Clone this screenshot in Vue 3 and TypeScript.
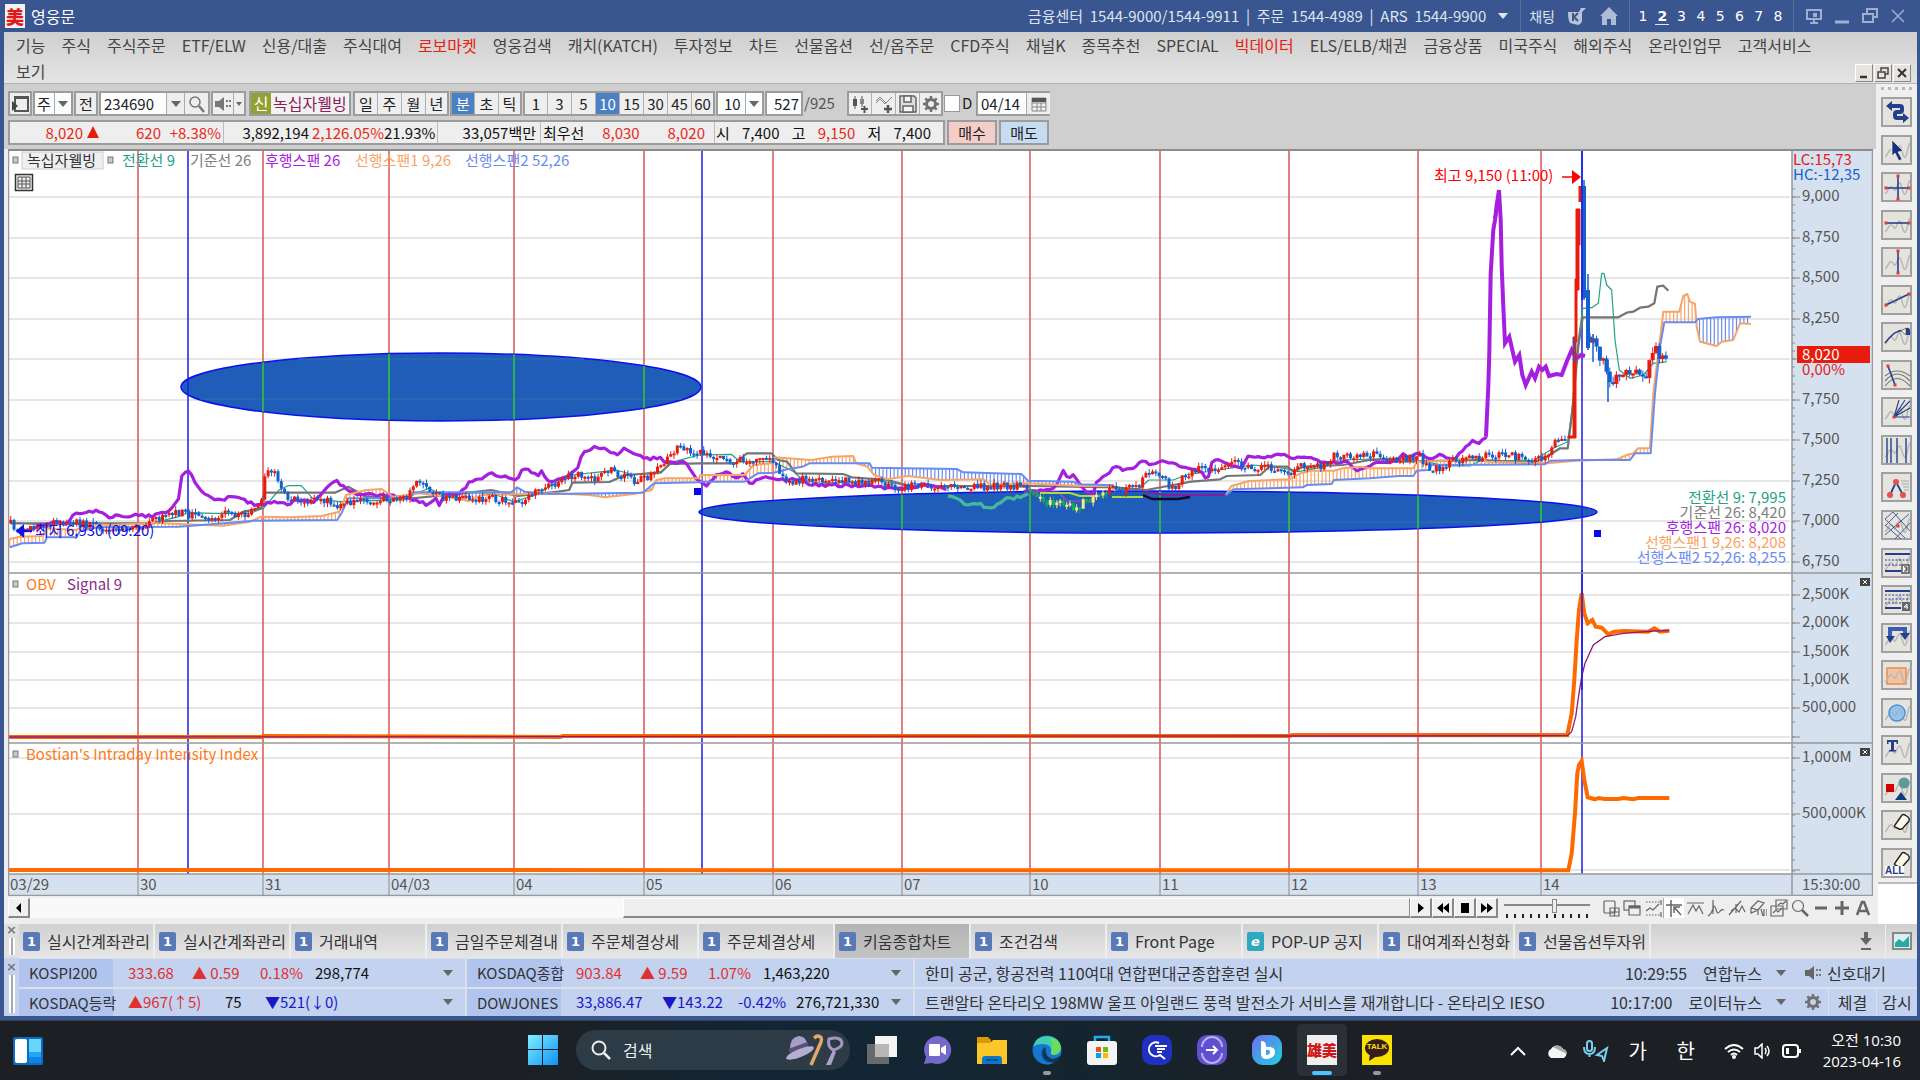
<script setup lang="ts">
import { ref } from 'vue'

type Pt = [number, number]

/* ---------- menus and toolbars ---------- */
const menus = ['기능', '주식', '주식주문', 'ETF/ELW', '신용/대출', '주식대여', '로보마켓', '영웅검색', '캐치(KATCH)', '투자정보', '차트', '선물옵션', '선/옵주문', 'CFD주식', '채널K', '종목추천', 'SPECIAL', '빅데이터', 'ELS/ELB/채권', '금융상품', '미국주식', '해외주식', '온라인업무', '고객서비스', '보기']
const hotMenus = ['로보마켓', '빅데이터']
const screens = [1, 2, 3, 4, 5, 6, 7, 8]
const periods = ['일', '주', '월', '년']
const units = ['분', '초', '틱']
const minutes = ['1', '3', '5', '10', '15', '30', '45', '60']
const unit = ref('분')
const minute = ref('10')
const code = ref('234690')
const count = ref('527')
const date = ref('04/14')
const marker = ref(false)

const tabs = ['실시간계좌관리', '실시간계좌관리', '거래내역', '금일주문체결내', '주문체결상세', '주문체결상세', '키움종합차트', '조건검색', 'Front Page', 'POP-UP 공지', '대여계좌신청화', '선물옵션투자위']
const activeTab = 6

interface Cell { t: string; w: number; c: string }
interface Quote { name: string; cells: Cell[] }
const quotes: Quote[][] = [
  [
    { name: 'KOSPI200', cells: [{ t: '333.68', w: 64, c: 'up' }, { t: '▲ 0.59', w: 68, c: 'up' }, { t: '0.18%', w: 55, c: 'up' }, { t: '298,774', w: 70, c: '' }] },
    { name: 'KOSDAQ등락', cells: [{ t: '▲967(↑5)', w: 97, c: 'up' }, { t: '75', w: 40, c: '' }, { t: '▼521(↓0)', w: 90, c: 'down' }] },
  ],
  [
    { name: 'KOSDAQ종합', cells: [{ t: '903.84', w: 64, c: 'up' }, { t: '▲ 9.59', w: 68, c: 'up' }, { t: '1.07%', w: 55, c: 'up' }, { t: '1,463,220', w: 80, c: '' }] },
    { name: 'DOWJONES', cells: [{ t: '33,886.47', w: 86, c: 'down' }, { t: '▼143.22', w: 76, c: 'down' }, { t: '-0.42%', w: 58, c: 'down' }, { t: '276,721,330', w: 82, c: '' }] },
  ],
]

/* ---------- chart geometry ---------- */
const left = (a: Pt[]): Pt[] => a.map(([x, y]) => [x / 2.24, 340 + y / 3])
const mid = (a: Pt[]): Pt[] => a.map(([x, y]) => [700 + x / 2.24, 400 + y / 3])
const right = (a: Pt[]): Pt[] => a.map(([x, y]) => [1400 + x / 3, 140 + y / 3])
const low = (a: Pt[]): Pt[] => a.map(([x, y]) => [1480 + x / 3, 560 + y / 3])
const line = (a: Pt[]): string => 'M' + a.map(([x, y]) => `${x.toFixed(1)} ${y.toFixed(1)}`).join('L')

function at(a: Pt[], x: number): number {
  for (let i = 1; i < a.length; i++) {
    if (x <= a[i][0]) {
      const [x0, y0] = a[i - 1]
      const [x1, y1] = a[i]
      return x1 === x0 ? y1 : y0 + ((y1 - y0) * (x - x0)) / (x1 - x0)
    }
  }
  return a[a.length - 1][1]
}

let seed = 41
const rnd = (): number => {
  seed = (seed * 1103515245 + 12345) % 2147483648
  return seed / 2147483648
}

const STEP = 3.3
function jitter(a: Pt[], amount: number): Pt[] {
  const out: Pt[] = []
  for (let x = a[0][0]; x < a[a.length - 1][0]; x += STEP) out.push([x, at(a, x) + (rnd() - 0.5) * amount])
  out.push(a[a.length - 1])
  return out
}

const price: Pt[] = [
  ...left([[24, 550], [45, 575], [75, 560], [110, 555], [150, 548], [190, 550], [215, 555], [250, 570], [285, 560], [320, 565], [345, 540], [380, 515], [430, 525], [480, 528], [520, 520], [555, 525], [577, 500], [588, 470], [592, 400], [615, 400], [625, 440], [650, 475], [690, 480], [735, 480], [765, 500], [790, 485], [830, 490], [860, 480], [905, 480], [920, 445], [935, 430], [960, 445], [985, 470], [1030, 475], [1080, 475], [1110, 475], [1160, 490], [1195, 462], [1230, 440], [1260, 415], [1285, 405], [1335, 415], [1365, 385], [1385, 405], [1425, 425], [1460, 410], [1488, 370], [1510, 330], [1540, 325], [1562, 340]]),
  ...mid([[10, 155], [30, 170], [60, 180], [110, 180], [160, 185], [175, 215], [205, 250], [240, 230], [290, 240], [340, 245], [400, 245], [450, 260], [500, 255], [560, 255], [620, 262], [700, 258], [738, 262], [750, 288], [775, 310], [800, 312], [840, 322], [870, 300], [900, 288], [920, 270], [980, 265], [1005, 210], [1035, 235], [1060, 270], [1085, 230], [1115, 205], [1160, 210], [1180, 185], [1220, 195], [1280, 205], [1310, 210], [1322, 240], [1340, 190], [1370, 200], [1405, 200], [1416, 170], [1460, 170], [1510, 165], [1540, 180]]),
  ...right([[0, 962], [55, 945], [90, 985], [130, 988], [150, 965], [250, 950], [300, 945], [380, 952], [410, 965], [440, 940], [470, 905], [503, 900]]),
]
const tail: Pt[] = right([[570, 590], [590, 630], [605, 660], [625, 715], [640, 728], [655, 705], [675, 685], [690, 688], [712, 706], [740, 695], [752, 665], [766, 635], [778, 640], [790, 660], [805, 646]])

interface Candle { x: number; top: number; h: number; hi: number; lo: number; w: number; fill: string }
function candles(a: Pt[], noise: number, wick: number, w: number): Candle[] {
  const out: Candle[] = []
  let prev = a[0][1]
  for (let x = a[0][0]; x < a[a.length - 1][0]; x += STEP) {
    const close = at(a, x) + (rnd() - 0.5) * noise
    const top = Math.min(prev, close)
    const h = Math.max(2, Math.abs(close - prev))
    const inside = x > 1029 && x < 1114 && close > 492
    const rising = close < prev
    const fill = inside ? (rising ? '#f2f08c' : '#10b04a') : rising ? '#e81c0c' : '#1560cc'
    out.push({ x, top, h, hi: top - rnd() * wick, lo: top + h + rnd() * wick, w, fill })
    prev = close
  }
  return out
}
const bars = [...candles(price, 8, 4, 3), ...candles(tail, 13, 6, 4)]

const chikou = jitter([
  ...left([[45, 575], [80, 560], [120, 545], [150, 550], [165, 525], [190, 515], [230, 515], [245, 530], [310, 525], [340, 530], [365, 520], [385, 505], [400, 480], [408, 400], [425, 395], [440, 440], [460, 465], [490, 480], [525, 470], [575, 495], [620, 485], [650, 495], [660, 475], [700, 490], [730, 450], [750, 420], [775, 445], [800, 460], [850, 465], [900, 470], [920, 475], [960, 495], [975, 470], [985, 495], [1000, 460], [1025, 465], [1050, 430], [1075, 415], [1100, 400], [1130, 410], [1155, 425], [1172, 380], [1205, 410], [1215, 385], [1225, 425], [1265, 415], [1295, 385], [1305, 335], [1335, 320], [1370, 335], [1387, 350], [1393, 322], [1425, 345], [1455, 355], [1480, 355], [1500, 370], [1540, 368], [1555, 410], [1566, 420]]),
  ...mid([[0, 240], [15, 262], [35, 225], [60, 215], [80, 235], [98, 222], [108, 255], [135, 232], [185, 240], [230, 240], [245, 255], [300, 255], [400, 260], [450, 268], [500, 255], [552, 268]]),
], 3)
const chikouInside = jitter(mid([[555, 290], [575, 290], [600, 318], [620, 310], [655, 328], [680, 300], [715, 290], [735, 280]]), 3)
const chikouLate = jitter([
  ...mid([[725, 275], [790, 270], [803, 245], [815, 210], [825, 240], [838, 222], [855, 265], [880, 285], [885, 250], [915, 220], [930, 195], [945, 210], [970, 205], [993, 180], [1010, 195], [1030, 182], [1070, 195], [1125, 215], [1137, 245], [1145, 190], [1160, 175], [1175, 190], [1215, 205], [1225, 168], [1260, 172], [1310, 162], [1325, 175], [1370, 172], [1400, 190], [1450, 185], [1470, 212], [1485, 205], [1510, 190], [1560, 185]]),
  ...right([[10, 938], [25, 955], [55, 940], [90, 960], [120, 945], [160, 960], [185, 935], [215, 903], [235, 912], [258, 890]]),
], 2)
const chikouPeak = right([[258, 890], [265, 740], [268, 640], [272, 400], [280, 270], [285, 240], [290, 195], [297, 150], [302, 240], [305, 380], [310, 500], [315, 610], [328, 590], [338, 635], [345, 665], [358, 645], [367, 705], [377, 735], [395, 695], [405, 715], [417, 680], [427, 690], [437, 680], [447, 708], [470, 702], [485, 705], [500, 665], [515, 630], [530, 655], [543, 645], [555, 648]])

const kijun: Pt[] = [
  ...left([[24, 550], [340, 550], [375, 543], [515, 540], [545, 515], [585, 505], [592, 458], [750, 458], [780, 440], [820, 470], [900, 478], [1000, 465], [1100, 450], [1160, 468], [1250, 455], [1275, 450], [1282, 428], [1365, 426], [1400, 405], [1480, 398], [1500, 372], [1568, 370]]),
  ...mid([[0, 190], [80, 190], [105, 160], [160, 160], [175, 180], [195, 185], [215, 220], [320, 222], [340, 232], [420, 240], [470, 258], [740, 258], [930, 262], [1000, 270], [1060, 255], [1100, 245], [1165, 238], [1180, 228], [1255, 225], [1275, 200], [1315, 200], [1330, 215], [1350, 200], [1440, 195], [1500, 180], [1568, 178]]),
  ...right([[0, 965], [150, 962], [250, 960], [400, 968], [440, 950], [480, 925], [503, 925], [515, 830], [535, 620], [548, 532], [655, 532], [680, 518], [700, 515], [720, 503], [745, 500], [763, 490], [772, 440], [790, 437], [805, 452]]),
]
const tenkan: Pt[] = [
  ...left([[24, 548], [110, 555], [345, 548], [400, 530], [420, 518], [480, 520], [560, 520], [590, 505], [625, 450], [645, 437], [675, 437], [700, 475], [760, 485], [830, 482], [900, 480], [960, 445], [985, 460], [1100, 458], [1150, 485], [1200, 465], [1230, 440], [1280, 405], [1350, 395], [1380, 390], [1420, 405], [1480, 395], [1510, 365], [1566, 345]]),
  ...mid([[0, 165], [70, 163], [90, 185], [165, 185], [210, 215], [230, 240], [270, 250], [400, 242], [470, 258], [700, 260], [738, 262]]),
]
const tenkanLate: Pt[] = [
  ...mid([[925, 270], [985, 265], [1005, 240], [1060, 240], [1090, 225], [1160, 210], [1240, 195], [1310, 205], [1340, 215], [1400, 200], [1430, 180], [1560, 175]]),
  ...right([[60, 962], [140, 978], [210, 978], [240, 962], [400, 962], [460, 925], [503, 905], [520, 780], [535, 600], [548, 505], [575, 503], [595, 490], [605, 400], [612, 400], [620, 435], [635, 450], [645, 600], [658, 690], [690, 715], [730, 705], [760, 670], [800, 665]]),
]
const spanA: Pt[][] = [
  [
    ...left([[22, 597], [45, 590], [95, 588], [105, 565], [170, 570], [200, 552], [250, 555], [345, 548], [400, 552], [500, 557], [560, 545], [585, 530], [650, 532], [720, 528], [760, 515], [775, 465], [820, 450], [855, 447], [880, 470], [940, 460], [1000, 470], [1050, 483], [1080, 465], [1240, 460], [1320, 465], [1355, 472], [1420, 462], [1460, 450], [1470, 420], [1490, 415], [1566, 415]]),
    ...mid([[0, 225], [100, 225], [120, 195], [160, 190], [166, 172], [250, 180], [295, 170], [343, 168], [350, 190], [375, 200], [390, 225], [420, 238], [465, 228], [540, 240], [635, 238], [650, 255], [730, 250], [850, 258], [920, 258], [930, 273]]),
  ],
  [
    ...mid([[1178, 285], [1190, 258], [1230, 243], [1320, 238], [1345, 220], [1370, 212], [1420, 212], [1440, 205], [1480, 200], [1500, 205], [1566, 205]]),
    ...right([[0, 985], [40, 985], [50, 965], [140, 962], [200, 955], [240, 950], [260, 965], [440, 970], [530, 962], [650, 958], [680, 945], [700, 940], [715, 925], [750, 925], [760, 760], [775, 640], [790, 515], [838, 515], [850, 468], [862, 462], [870, 485], [885, 492], [890, 560], [900, 605], [950, 618], [965, 605], [1000, 600], [1020, 550], [1053, 552]]),
  ],
]
const spanB: Pt[][] = [
  [
    ...left([[22, 622], [50, 610], [100, 608], [105, 592], [170, 592], [180, 572], [220, 562], [400, 560], [480, 552], [570, 542], [755, 540], [765, 520], [780, 475], [920, 475], [925, 457], [1145, 457], [1158, 442], [1175, 455], [1230, 462], [1440, 458], [1465, 430], [1566, 427]]),
    ...mid([[0, 245], [100, 245], [130, 220], [165, 218], [195, 208], [230, 200], [245, 190], [380, 190], [385, 203], [575, 207], [590, 217], [720, 222], [735, 242], [835, 245], [850, 253], [925, 256], [935, 273]]),
  ],
  [
    ...mid([[1178, 285], [1195, 268], [1350, 262], [1360, 255], [1415, 252], [1420, 240], [1500, 235], [1566, 228]]),
    ...right([[0, 1008], [40, 1008], [50, 992], [85, 990], [95, 975], [435, 973], [450, 962], [540, 960], [690, 960], [705, 940], [752, 940], [765, 760], [780, 620], [793, 547], [885, 547], [893, 537], [950, 532], [1053, 530]]),
  ],
]
let hatchA = ''
let hatchB = ''
spanA.forEach((a, i) => {
  const b = spanB[i]
  for (let x = a[0][0]; x <= a[a.length - 1][0]; x += 3.7) {
    const ya = at(a, x)
    const yb = at(b, x)
    const seg = `M${x.toFixed(1)} ${ya.toFixed(1)}V${yb.toFixed(1)}`
    if (ya < yb) hatchA += seg
    else hatchB += seg
  }
})

const obv: Pt[] = [[8, 737], [262, 737], [263, 736], [560, 737], [563, 736], [644, 736], [1290, 736], [1292, 735], ...low([[262, 525], [275, 460], [283, 360], [290, 240], [297, 150], [305, 100], [313, 160], [323, 190], [337, 180], [347, 200], [365, 203], [385, 223], [400, 216], [430, 213], [505, 215], [523, 205], [540, 215], [568, 212]])]
const signal: Pt[] = [[8, 737], [1290, 736], ...low([[262, 527], [275, 515], [287, 470], [297, 400], [305, 350], [315, 310], [340, 255], [375, 230], [430, 220], [520, 213], [568, 212]])]
const intensity: Pt[] = [[8, 870], ...low([[265, 931], [275, 880], [285, 760], [292, 640], [297, 615], [305, 603], [313, 660], [323, 712], [345, 718], [355, 714], [375, 717], [415, 717], [430, 714], [460, 718], [475, 714], [568, 714]])]

const priceLabels = ['9,000', '8,750', '8,500', '8,250', '', '7,750', '7,500', '7,250', '7,000', '6,750']
const priceTicks = priceLabels.map((t, i) => ({ t, y: Math.round(197 + 40.55 * i) }))
const obvTicks = ['2,500K', '2,000K', '1,500K', '1,000K', '500,000', ''].map((t, i) => ({ t, y: Math.round(595 + 28.3 * i) }))
const intTicks = ['1,000M', '500,000K', ''].map((t, i) => ({ t, y: 758 + 56 * i }))
const grid = [...priceTicks, ...obvTicks, ...intTicks]
let minor = ''
for (let y = 189; y < 570; y += 8.11) minor += `M1792 ${Math.round(y)}h3`
for (let y = 581; y < 740; y += 14.15) minor += `M1792 ${Math.round(y)}h3`
for (let y = 747; y < 872; y += 11.25) minor += `M1792 ${Math.round(y)}h3`

const days = [
  { x: 8, t: '03/29' }, { x: 138, t: '30' }, { x: 263, t: '31' }, { x: 389, t: '04/03' }, { x: 514, t: '04' }, { x: 644, t: '05' }, { x: 773, t: '06' },
  { x: 902, t: '07' }, { x: 1030, t: '10' }, { x: 1160, t: '11' }, { x: 1289, t: '12' }, { x: 1418, t: '13' }, { x: 1541, t: '14' },
]
const marks = [188, 702, 1582]
const inEllipse1 = days.slice(2, 6)
const ellipse2Days = days.slice(7)
const span1 = (x: number) => 34 * Math.sqrt(Math.max(0, 1 - ((x - 441) / 260) ** 2))
const span2 = (x: number) => 21 * Math.sqrt(Math.max(0, 1 - ((x - 1148) / 449) ** 2))

const readout = [
  { t: '전환선 9: 7,995', c: '#1fa287' }, { t: '기준선 26: 8,420', c: '#808080' }, { t: '후행스팬 26: 8,020', c: '#a51fe0' },
  { t: '선행스팬1 9,26: 8,208', c: '#f7a468' }, { t: '선행스팬2 52,26: 8,255', c: '#6a8cf0' },
]
const legend = [
  { x: 122, t: '전환선 9', c: '#1fa287' }, { x: 190, t: '기준선 26', c: '#808080' }, { x: 265, t: '후행스팬 26', c: '#a51fe0' },
  { x: 355, t: '선행스팬1 9,26', c: '#f7a468' }, { x: 465, t: '선행스팬2 52,26', c: '#6a8cf0' },
]

/* ---------- drawing tools, 28 x 28 each ---------- */
const wave = '<path d="M2 21C5 19 6 12 9 14C11 16 11 19 13 16C15 10 17 8 18 12C20 18 21 24 23 20C25 15 25 9 27 7" fill="none" stroke="#b8b8b8" stroke-width="1.5"/>'
const dot = (x: number, y: number, r = 1.5) => `<rect x="${x - r}" y="${y - r}" width="${2 * r}" height="${2 * r}" fill="#e03a3a"/>`
const navy = (d: string, w = 1.6) => `<path d="${d}" fill="none" stroke="#24408c" stroke-width="${w}"/>`
const eraser = '<path d="M12 14L19 4Q20 3 22 4L25 6Q27 8 26 10L20 17Q18 19 16 18L12 16Q11 15 12 14Z" fill="#fdf8e8" stroke="#222" stroke-width="1.4"/>'
const tools: { name: string; svg: string }[] = [
  { name: '새로고침', svg: '<path d="M8 8H17Q19 8 19 10V12Q19 14 17 14H14Q12 14 12 16V18Q12 20 14 20H21" fill="none" stroke="#24408c" stroke-width="4"/><path d="M3 8L9 3V13ZM26 20L20 15V25Z" fill="#24408c"/>' },
  { name: '선택', svg: wave + '<path d="M9 4L20 15L15 16L19 23L16 25L12 17L9 20Z" fill="#1c2f78" stroke="#fff" stroke-width=".6"/>' },
  { name: '십자선', svg: wave + navy('M3 15H26M15 3V26') + dot(3, 15) + dot(26, 15) + dot(15, 3) + dot(15, 26) },
  { name: '수평선', svg: wave + navy('M3 12H26') + dot(3, 12) + dot(26, 12) },
  { name: '수직선', svg: wave + navy('M15 3V25') + dot(15, 3) + dot(15, 25) },
  { name: '추세선', svg: wave + navy('M3 19L26 8') + dot(3, 19) + dot(26, 8) },
  { name: '펜', svg: wave + navy('M2 20Q11 9 14 9Q18 7 20 8') + '<path d="M18 8L23 5V12Z" fill="#fff2c8" stroke="#777"/><path d="M23 5Q28 3 27 12H23Z" fill="#24408c"/>' },
  { name: '부채꼴', svg: '<path d="M2 25Q14 10 27 25M2 20Q14 6 27 20M2 15Q14 5 27 15" fill="none" stroke="#777" stroke-width="1.2"/>' + navy('M5 5L12 24') + dot(5, 5) + dot(12, 24) },
  { name: '팬', svg: wave + navy('M11 19L16 2M11 19L22 2M11 19L27 3M11 19L27 10M11 19H27', 1.1) + dot(11, 19) },
  { name: '시간대', svg: wave + navy('M4 2V27M8 2V27M14 2V27M23 2V27', 1.4) },
  { name: '파동', svg: navy('M7 22L13 9L20 22', 1.8) + '<circle cx="7" cy="22" r="3" fill="#e45050"/><circle cx="13" cy="9" r="3" fill="#e45050"/><circle cx="20" cy="22" r="3" fill="#e45050"/><path d="M18 8H26M19 11H26M20 14H26M21 17H26" stroke="#aaa"/>' },
  { name: '격자', svg: wave + navy('M2 8L10 1L27 20M2 14L18 28M2 24L26 3M12 28L27 12M2 8L22 27M2 15L15 2', 0.8) + dot(15, 15) },
  { name: '3등분', svg: wave + navy('M2 5H27M2 22H18', 2) + '<path d="M2 11H27M2 16H18" stroke="#24408c" stroke-dasharray="2 1.5"/><rect x="19" y="16" width="7" height="8" fill="#fff" stroke="#555" stroke-width="1.5"/><path d="M21 18h3v4h-3m1-2h2" stroke="#333" fill="none"/>' },
  { name: '4등분', svg: wave + navy('M2 5H27M2 22H18', 2) + '<path d="M2 9H27M2 13H27M2 17H18" stroke="#24408c" stroke-dasharray="2 1.5"/><rect x="19" y="16" width="8" height="9" fill="#666"/><path d="M24 23V18L21 21H25" stroke="#fff" fill="none"/>' },
  { name: '되돌림', svg: wave + '<path d="M7 15V5H22V10" fill="none" stroke="#3c5cb0" stroke-width="4"/><path d="M3 12H12L7 19ZM17 9H27L22 16Z" fill="#24408c"/>' },
  { name: '사각형', svg: '<rect x="4" y="7" width="19" height="16" fill="#f3c2a0" stroke="#ee8a4c" stroke-width="1.5"/>' + wave },
  { name: '원', svg: wave + '<circle cx="14" cy="14" r="8" fill="#7fb8ea" fill-opacity=".75" stroke="#4a90d8" stroke-width="1.4"/>' },
  { name: '문자', svg: wave + '<path d="M4 4H15V8H13.500V6H11V14H13V15.500H6V14H8V6H5.500V8H4Z" fill="#24408c"/>' },
  { name: '도형', svg: wave + '<rect x="3" y="10" width="8" height="8" fill="#d00000"/><circle cx="21" cy="9" r="5.500" fill="#5e9a98"/><path d="M18 18L24 26H12Z" fill="#0c3a7c"/>' },
  { name: '지우개', svg: wave + eraser },
  { name: '모두 지우기', svg: eraser },
]
const viewTools = [
  '<rect x="2" y="2" width="11" height="12" rx="1"/><path d="M8 9h9v8H8zM12.500 9v8M8 13h9"/>',
  '<rect x="1" y="2" width="11" height="9"/><path d="M6 7h11v9H6z" fill="#eee"/><path d="M6 8h11" stroke-width="3"/>',
  '<path d="M2 3h14M2 16h14" stroke-dasharray="1.500 1.500"/><path d="M2 12l4-3 3 2 6-6M17 1v5M17 13v5"/>',
  '<path d="M1 6H17M6 1V18M9 8l7 8M9 14V8h6" stroke-width="1.500"/>',
  '<path d="M1 4H18M2 15l5-9 3 6 3-5 4 8"/>',
  '<path d="M6 1V15M1 17c4-2 5-8 6-10 2 0 2 7 4 7s2-5 6-3"/>',
  '<path d="M1 16L13 2M3 12l4-3 4 4 3-6 3 6M8 5v9"/>',
  '<path d="M2 9l7-7 6 2-6 7-7 3zM2 9l7 2v5M12 10l2 7M15 10v7M18 10v7"/>',
  '<path d="M6 1h11v9H6zM1 7h12v10H1z" fill="#eee"/><path d="M3 14l3-3 2 2 4-4M8 6l3-2 2 1 3-3"/>',
  '<circle cx="7" cy="7" r="5.500"/><path d="M11 11l6 6" stroke-width="2.500"/>',
  '<path d="M3 9h12" stroke-width="3"/>',
  '<path d="M2 9h14M9 2v14" stroke-width="3"/>',
  '<path d="M3 16L8 3h2l5 13M5 12h8" stroke-width="2.500"/>',
]
const gear = '<circle cx="9" cy="9" r="4.500" fill="none" stroke="#707070" stroke-width="3"/><path d="M9 1v3M9 14v3M1 9h3M14 9h3M3.300 3.300l2 2M12.700 12.700l2 2M14.700 3.300l-2 2M5.300 12.700l-2 2" stroke="#707070" stroke-width="2.500"/>'
const topTools = [
  { n: '차트유형', s: '<path d="M4 1v13M11 1v11" stroke="#555"/><rect x="2" y="4" width="4" height="7" fill="#555"/><rect x="9" y="4" width="4" height="5" fill="#888"/><path d="M10 14h7M13.500 11v7" stroke="#555" stroke-width="2"/>' },
  { n: '지표추가', s: '<path d="M1 6l4-4 6 6 6-6M1 8l4-4 5 5 6-6" fill="none" stroke="#888"/><path d="M9 14h8M13 10v8" stroke="#555" stroke-width="2.500"/>' },
  { n: '저장', s: '<path d="M1 1h14l2 2v14H1z" fill="#ddd" stroke="#666" stroke-width="1.500"/><path d="M5 1h7v6H5zM4 11h10v6H4z" fill="#f6f6f6" stroke="#666" stroke-width="1.500"/>' },
  { n: '설정', s: gear },
]
</script>

<template>
  <div class="desktop">
    <div class="app">
      <header class="title">
        <span class="logo">美</span>
        <h1>영웅문</h1>
        <span class="phones">금융센터 &nbsp;1544-9000/1544-9911 &nbsp;| &nbsp;주문 &nbsp;1544-4989 &nbsp;| &nbsp;ARS &nbsp;1544-9900</span>
        <button class="caret light" aria-label="전화 목록"></button>
        <div class="tgroup chat">
          <button>채팅</button>
          <button aria-label="키움"><svg width="20" height="20" viewBox="0 0 20 20"><path d="M1 6h11l2-4h5l-4 4v8q0 4-4 5L3 17Q1 14 1 6z" fill="#b9c2d6" /><path d="M6 7v8M11 7l-4 4 4 4" stroke="#3a5690" stroke-width="2" fill="none" /></svg></button>
          <button aria-label="홈"><svg width="20" height="20" viewBox="0 0 20 20"><path d="M1 10L10 1l9 9h-2v9h-5v-6H8v6H3v-9z" fill="#aebbd4" /></svg></button>
        </div>
        <div class="tgroup nums"><button v-for="n in screens" :key="n" :class="{ on: n === 2 }">{{ n }}</button></div>
        <div class="tgroup wins">
          <button aria-label="모니터"><svg width="18" height="18" viewBox="0 0 18 18" fill="none" stroke="#9fafcf" stroke-width="2"><path d="M2 3h14v9H2zM5 16h8M9 12v4" /><path d="M8 6h4v4H8z" fill="#9fafcf" stroke="none" /></svg></button>
          <button aria-label="최소화"><svg width="18" height="18" viewBox="0 0 18 18"><path d="M2 15h14" stroke="#9fafcf" stroke-width="3" /></svg></button>
          <button aria-label="복원"><svg width="18" height="18" viewBox="0 0 18 18" fill="none" stroke="#9fafcf" stroke-width="2"><path d="M6 6V2h10v8h-4M2 7h10v8H2z" /></svg></button>
          <button aria-label="닫기"><svg width="18" height="18" viewBox="0 0 18 18"><path d="M3 3l12 12M15 3L3 15" stroke="#9fafcf" stroke-width="1.5" /></svg></button>
        </div>
      </header>

      <nav class="menu">
        <a v-for="m in menus" :key="m" href="#" :class="{ hot: hotMenus.includes(m) }">{{ m }}</a>
        <div class="mdi">
          <button aria-label="창 최소화"><svg width="14" height="14" viewBox="0 0 14 14"><path d="M3 11h7" stroke="#333" stroke-width="2.5" /></svg></button>
          <button aria-label="창 복원"><svg width="14" height="14" viewBox="0 0 14 14" fill="none" stroke="#444" stroke-width="1.5"><path d="M5 5V2h7v6h-3M2 6h7v6H2z" /></svg></button>
          <button aria-label="창 닫기"><svg width="14" height="14" viewBox="0 0 14 14"><path d="M3 3l8 8M11 3l-8 8" stroke="#333" stroke-width="2" /></svg></button>
        </div>
      </nav>

      <main class="main">
        <section class="work">
          <div class="row tools1">
            <button class="box sq" aria-label="패널"><svg width="18" height="18" viewBox="0 0 18 18"><path d="M4 2h13v14H4zM4 3h13" fill="none" stroke="#555" stroke-width="2" /><path d="M1 6l6 5-6 5z" fill="#444" /></svg></button>
            <label class="box pick"><select aria-label="구분"><option>주</option></select><i class="caret"></i></label>
            <button class="box sq">전</button>
            <div class="box code">
              <input v-model="code" aria-label="종목코드" />
              <button class="arrow" aria-label="종목 목록"><i class="caret"></i></button>
              <button class="sq" aria-label="검색"><svg width="18" height="18" viewBox="0 0 18 18"><circle cx="7" cy="7" r="5" fill="none" stroke="#777" stroke-width="1.5" /><path d="M11 11l5 6" stroke="#777" stroke-width="2.5" /></svg></button>
            </div>
            <div class="box snd">
              <button aria-label="소리"><svg width="18" height="16" viewBox="0 0 18 16"><path d="M1 5h4l5-4v14l-5-4H1z" fill="#777" /><path d="M12 5h2M15 5h2M12 10h2M15 10h2" stroke="#777" stroke-width="2" /></svg></button>
              <button class="thin" aria-label="소리 설정"><i class="caret"></i></button>
            </div>
            <div class="box stock"><b>신</b><span>녹십자웰빙</span></div>
            <div class="box seg"><button v-for="p in periods" :key="p">{{ p }}</button></div>
            <div class="box seg"><button v-for="u in units" :key="u" :class="{ on: u === unit }" @click="unit = u">{{ u }}</button></div>
            <div class="box seg"><button v-for="m in minutes" :key="m" :class="{ on: m === minute }" @click="minute = m">{{ m }}</button></div>
            <label class="box pick wide"><select aria-label="분 간격"><option>10</option></select><i class="caret"></i></label>
            <input v-model="count" class="box cnt" aria-label="표시 개수" />
            <span class="total">/925</span>
            <div class="box seg"><button v-for="t in topTools" :key="t.n" :aria-label="t.n"><svg width="18" height="18" viewBox="0 0 18 18" v-html="t.s"></svg></button></div>
            <label class="chk"><input v-model="marker" type="checkbox" />D</label>
            <div class="box date"><input v-model="date" aria-label="날짜" /><button class="sq" aria-label="달력"><svg width="16" height="16" viewBox="0 0 16 16"><path d="M1 2h14v13H1zM1 7h14M1 11h14M6 7v8M10 7v8" fill="none" stroke="#888" /><path d="M1 2h14v4H1z" fill="#555" /></svg></button></div>
          </div>

          <div class="row tools2">
            <div class="strip">
              <div class="s1"><span class="r w73">8,020</span><i class="tri"></i><span class="r w62">620</span><span class="r w60">+8.38%</span></div>
              <div class="s2"><span class="b r w86">3,892,194</span><span class="r w74">2,126.05%</span><span class="b r w50">21.93%</span></div>
              <div class="s3"><span class="b r w98">33,057백만</span></div>
              <div class="s4"><span class="b">최우선</span><span class="r w53">8,030</span><span class="r w63">8,020</span></div>
              <div class="s5"><span class="b">시</span><span class="b">7,400</span><span class="b">고</span><span>9,150</span><span class="b">저</span><span class="b">7,400</span></div>
            </div>
            <button class="buy">매수</button>
            <button class="sell">매도</button>
          </div>

          <svg class="chart" viewBox="8 149 1865 747" role="img" aria-label="녹십자웰빙 10분 차트">
            <rect x="8" y="149" width="1784" height="725" fill="#fff" />
            <rect x="1792" y="149" width="81" height="747" fill="#d6e1ef" />
            <rect x="8" y="874" width="1865" height="22" fill="#d6e1ef" />
            <path v-for="g in grid" :key="'g' + g.y" :d="`M8 ${g.y}H1790`" stroke="#dedede" stroke-width="1.5" />
            <path v-for="d in days.slice(1)" :key="'d' + d.x" :d="`M${d.x} 150V874`" stroke="#d94848" stroke-width="1.4" />

            <ellipse cx="441" cy="387" rx="260" ry="34" fill="#1f5db8" stroke="#0a10f0" stroke-width="1.5" />
            <ellipse cx="1148" cy="512" rx="449" ry="21" fill="#1f5db8" stroke="#0a10f0" stroke-width="1.5" />
            <path d="M298 359H584M200 399H682M800 522H1500" stroke="#376fae" />
            <path v-for="d in inEllipse1" :key="'e' + d.x" :d="`M${d.x} ${387 - span1(d.x)}V${387 + span1(d.x)}`" stroke="#2ccc28" stroke-width="1.5" />
            <path v-for="d in ellipse2Days" :key="'f' + d.x" :d="`M${d.x} ${512 - span2(d.x)}V${512 + span2(d.x)}`" stroke="#2ccc28" stroke-width="1.5" />
            <path v-for="m in marks" :key="'m' + m" :d="`M${m} 150V874`" stroke="#1c1ce8" stroke-width="1.5" />

            <g fill="none" stroke-linejoin="round">
              <path :d="hatchA" stroke="#f7a468" stroke-width="1.2" />
              <path :d="hatchB" stroke="#6a8cf0" stroke-width="1.2" />
              <path :d="line(tenkan)" stroke="#1fa287" stroke-width="1.2" />
              <path :d="line(tenkanLate)" stroke="#1fa287" stroke-width="1.2" />
              <path :d="line(kijun)" stroke="#747474" stroke-width="2.2" />
              <path :d="line(chikou)" stroke="#a51fe0" stroke-width="3.2" />
              <path :d="line(chikouLate)" stroke="#a51fe0" stroke-width="3.2" />
              <path :d="line(chikouInside)" stroke="#46ba96" stroke-width="3.2" />
              <path d="M1036 492H1058L1067 501H1088L1108 492" stroke="#c040b8" stroke-width="1.2" />
              <path d="M1040 493H1070L1080 496H1100M1112 497H1143" stroke="#a8dc40" stroke-width="2.2" />
              <path d="M1145 492L1165 495H1225" stroke="#8020a0" stroke-width="2" />
              <path d="M1143 495L1152 499H1178L1190 497" stroke="#150828" stroke-width="2.4" />
              <path v-for="(a, i) in spanA" :key="'a' + i" :d="line(a)" stroke="#f7a468" stroke-width="2" />
              <path v-for="(a, i) in spanB" :key="'b' + i" :d="line(a)" stroke="#6a8cf0" stroke-width="2" />
            </g>
            <g v-for="(c, i) in bars" :key="i">
              <path :d="`M${c.x} ${c.hi}V${c.lo}`" :stroke="c.fill" />
              <rect :x="c.x - c.w / 2" :y="c.top" :width="c.w" :height="c.h" :fill="c.fill" />
            </g>
            <path :d="line(chikouPeak)" fill="none" stroke="#a51fe0" stroke-width="4" />
            <path d="M1500 195L1497 218L1493 218Z" fill="#a51fe0" />
            <path d="M1568 436H1573V337H1575V279H1576V209H1580V245H1579V290H1577V342H1576V438H1568Z" fill="#e81c0c" stroke="#e81c0c" />
            <path d="M1580 186V202" stroke="#e81c0c" stroke-width="3" />
            <path d="M1582 186H1586V290H1590V348H1586V298H1582Z" fill="#1560cc" />
            <path d="M1584 180V300M1588 274V350M1593 334V362M1608 360V402M1574 338V362" stroke="#1560cc" stroke-width="1.5" />
            <path d="M1582 150V300" stroke="#1c1ce8" stroke-width="1.5" />

            <path :d="line(obv)" fill="none" stroke="#ff6a00" stroke-width="4" />
            <path :d="line(signal)" fill="none" stroke="#8c1c78" stroke-width="1.3" />
            <path :d="line(intensity)" fill="none" stroke="#ff6a00" stroke-width="4" />
            <path d="M1582 570V690" stroke="#1c1ce8" stroke-width="1.5" />

            <path d="M8 573H1873M8 743H1873M8 874H1873M8 895.500H1873M1792 149V896M1872.500 149V896M8.500 149V896" stroke="#999" stroke-width="1.5" />
            <path d="M8 150H1873" stroke="#8c8c8c" stroke-width="2" />
            <path v-for="d in days.slice(1)" :key="'t' + d.x" :d="`M${d.x} 874V896`" stroke="#8a8a8a" />
            <path :d="minor" stroke="#8a8a8a" />

            <g class="axis">
              <template v-for="g in grid" :key="'l' + g.y">
                <path :d="`M1792 ${g.y}h8`" stroke="#8a8a8a" />
                <text v-if="g.t" x="1802" :y="g.y + 4">{{ g.t }}</text>
              </template>
              <text v-for="d in days" :key="'x' + d.x" :x="d.x + 2" y="890">{{ d.t }}</text>
              <text x="1802" y="890">15:30:00</text>
            </g>
            <rect x="1797" y="346" width="73" height="17" fill="#e81c0c" />
            <g>
              <text x="1802" y="360" fill="#fff">8,020</text>
              <text x="1802" y="375" fill="#e0201c">0,00%</text>
              <text x="1793" y="165" fill="#e0201c">LC:15,73</text>
              <text x="1793" y="180" fill="#1c60d0">HC:-12,35</text>
              <text x="1434" y="181" fill="#f00">최고 9,150 (11:00)</text>
              <text x="35" y="536" fill="#1010e8">최저 6,930 (09:20)</text>
              <text v-for="l in legend" :key="l.t" :x="l.x" y="166" :fill="l.c">{{ l.t }}</text>
              <text v-for="(r, i) in readout" :key="r.t" x="1786" :y="503 + 15 * i" :fill="r.c" text-anchor="end">{{ r.t }}</text>
              <text x="26" y="590" fill="#ff7a1c">OBV</text>
              <text x="67" y="590" fill="#8c2a8c">Signal 9</text>
              <text x="26" y="760" fill="#ff7a1c">Bostian's Intraday Intensity Index</text>
              <rect x="22" y="152" width="81" height="17" fill="#efefef" stroke="#ccc" />
              <text x="27" y="166" fill="#333">녹십자웰빙</text>
            </g>
            <path d="M1562 177H1574" stroke="#f00" stroke-width="1.5" /><path d="M1572 170L1581 177L1572 184Z" fill="#f00" />
            <path d="M22 531H32" stroke="#1010e8" stroke-width="2" /><path d="M24 524L16 531L24 538Z" fill="#1010e8" />
            <g fill="#c8c8c8" stroke="#777"><rect x="13" y="157" width="5" height="6" /><rect x="108" y="157" width="5" height="6" /><rect x="13" y="581" width="5" height="6" /><rect x="13" y="751" width="5" height="6" /></g>
            <rect x="15.500" y="174.500" width="17" height="16" fill="#eee" stroke="#333" stroke-width="1.5" />
            <path d="M18 177H30V188H18ZM18 181H30M18 184H30M22 177V188M26 177V188" fill="none" stroke="#555" />
            <rect x="694" y="488" width="7" height="7" fill="#0808f0" /><rect x="1594" y="530" width="7" height="7" fill="#0808f0" />
            <g v-for="y in [578, 748]" :key="y"><rect x="1860" :y="y" width="10" height="8" fill="#444" /><path :d="`M1863 ${y + 2}l4 4m0-4l-4 4`" stroke="#fff" /></g>
          </svg>

          <div class="scroll">
            <button class="sb" aria-label="왼쪽으로"><svg width="14" height="12"><path d="M9 1L4 6l5 5z" /></svg></button>
            <div class="track"><div class="thumb"></div></div>
            <button class="sb" aria-label="재생"><svg width="14" height="12"><path d="M4 1l6 5-6 5z" /></svg></button>
            <button class="sb" aria-label="뒤로"><svg width="14" height="12"><path d="M7 1L1 6l6 5zM13 1L7 6l6 5z" /></svg></button>
            <button class="sb" aria-label="정지"><svg width="14" height="12"><path d="M3 1h8v10H3z" /></svg></button>
            <button class="sb" aria-label="앞으로"><svg width="14" height="12"><path d="M1 1l6 5-6 5zM7 1l6 5-6 5z" /></svg></button>
            <div class="slide"><input type="range" min="0" max="100" value="59" aria-label="확대 비율" /></div>
            <button v-for="(v, i) in viewTools" :key="i" class="vt" :class="{ on: i === 3 }" :aria-label="'보기 도구 ' + (i + 1)"><svg width="18" height="18" viewBox="0 0 18 18" fill="none" stroke="#666" stroke-width="1.2" v-html="v"></svg></button>
          </div>
        </section>

        <aside class="side">
          <div class="grip"></div>
          <div class="stack">
            <button v-for="t in tools" :key="t.name" :aria-label="t.name"><svg width="28" height="28" viewBox="0 0 28 28" v-html="t.svg"></svg><span v-if="t.name === '모두 지우기'">ALL</span></button>
          </div>
          <div class="blank"></div>
        </aside>
      </main>

      <div class="dock">
        <div class="hold"><i>×</i><u></u></div>
        <div class="tabs">
          <button v-for="(t, i) in tabs" :key="i" :class="{ on: i === activeTab }"><b :class="{ web: i === 9 }">{{ i === 9 ? 'e' : 1 }}</b><span>{{ t }}</span></button>
        </div>
        <button class="ico" aria-label="내리기"><svg width="14" height="20" viewBox="0 0 14 20"><path d="M5 1h4v6h4l-6 7-6-7h4zM2 17h10v2H2z" fill="#666" /></svg></button>
        <button class="ico pic" aria-label="화면"><svg width="20" height="18" viewBox="0 0 20 18"><rect x="1" y="1" width="18" height="16" fill="#d8f0f0" stroke="#888" stroke-width="2" /><path d="M3 15V11l4-4 4 3 6-6v11z" fill="#2aa8a4" /></svg></button>
      </div>

      <div class="ticker">
        <div class="hold tall"><i>×</i><u></u></div>
        <div v-for="(g, gi) in quotes" :key="gi" class="group">
          <div v-for="q in g" :key="q.name" class="quote">
            <span class="name">{{ q.name }}</span>
            <span v-for="c in q.cells" :key="c.t" class="cell" :class="c.c" :style="{ width: c.w + 'px' }">{{ c.t }}</span>
            <button class="drop" :aria-label="q.name + ' 선택'"><i class="caret"></i></button>
          </div>
        </div>
        <div class="news">
          <div class="item"><p>한미 공군, 항공전력 110여대 연합편대군종합훈련 실시</p><time>10:29:55</time><span class="src">연합뉴스</span><button class="drop" aria-label="뉴스 선택"><i class="caret"></i></button>
            <button class="sig"><svg width="18" height="16" viewBox="0 0 18 16"><path d="M1 5h4l5-4v14l-5-4H1z" fill="#666" /><path d="M12 5h2M15 5h2M12 10h2M15 10h2" stroke="#777" stroke-width="2" /></svg>신호대기</button></div>
          <div class="item"><p>트랜알타 온타리오 198MW 울프 아일랜드 풍력 발전소가 서비스를 재개합니다 - 온타리오 IESO</p><time>10:17:00</time><span class="src">로이터뉴스</span><button class="drop" aria-label="통신사 선택"><i class="caret"></i></button>
            <div class="end"><button aria-label="설정"><svg width="18" height="18" viewBox="0 0 18 18" v-html="gear"></svg></button><button>체결</button><button>감시</button></div></div>
        </div>
      </div>
    </div>

    <footer class="taskbar">
      <div class="widget"><button aria-label="위젯"><svg width="30" height="28" viewBox="0 0 30 28"><rect width="30" height="28" rx="2" fill="#0c6cc4" /><rect x="2" y="2" width="12" height="24" rx="2" fill="#fff" /><rect x="16" y="2" width="12" height="13" fill="#68d6fc" /><rect x="16" y="15" width="12" height="5" fill="#22a6f6" /><rect x="16" y="20" width="12" height="6" fill="#0c84ea" /></svg></button></div>
      <div class="pins">
        <button aria-label="시작"><svg width="30" height="30" viewBox="0 0 30 30"><defs><linearGradient id="w" x2="1" y2="1"><stop stop-color="#80f0ff" /><stop offset="1" stop-color="#1090f8" /></linearGradient></defs><path d="M0 0h14v14H0zM15 0h15v14H15zM0 15h14v15H0zM15 15h15v15H15z" fill="url(#w)" /></svg></button>
        <label class="search">
          <svg width="20" height="20" viewBox="0 0 20 20"><circle cx="8" cy="8" r="6.500" fill="none" stroke="#eee" stroke-width="2" /><path d="M13 13l6 6" stroke="#eee" stroke-width="2.500" /></svg>
          <input placeholder="검색" aria-label="검색" />
          <svg width="58" height="32" viewBox="0 0 58 32"><path d="M4 15Q4 3 13 2Q20 2 22 12L24 16Z" fill="#a8a0c4" /><path d="M3 17L22 10" stroke="#5a5080" stroke-width="4" /><ellipse cx="14" cy="19" rx="15" ry="4" transform="rotate(-22 14 19)" fill="#b4aed0" /><path d="M25 31L35 8Q37 2 31 2L28 4" fill="none" stroke="#e0a868" stroke-width="3.500" /><path d="M43 5Q55 2 56 9Q56 14 47 16Q41 12 43 5Z" fill="none" stroke="#a098c0" stroke-width="3" /><path d="M47 16L50 18L45 31L40 31Z" fill="#a8a2c8" /></svg>
        </label>
        <button aria-label="작업 보기"><svg width="30" height="30" viewBox="0 0 30 30"><rect x="8" y="1" width="22" height="21" fill="#f4f4f4" /><rect x="0" y="9" width="22" height="20" fill="#777" fill-opacity=".85" /><rect x="8" y="9" width="14" height="13" fill="#b8b8b8" /></svg></button>
        <button aria-label="채팅"><svg width="30" height="30" viewBox="0 0 30 30"><path d="M15 1a14 14 0 1 1-5 27L2 29l2-7A14 14 0 0 1 15 1z" fill="#7468c8" /><rect x="7" y="9" width="11" height="12" rx="1" fill="#fff" /><path d="M19 13l5-3v10l-5-3z" fill="#fff" /></svg></button>
        <button aria-label="탐색기"><svg width="30" height="30" viewBox="0 0 30 30"><path d="M0 2h11l3 3v4H0z" fill="#dc9800" /><path d="M0 8h13l3-3h14v24H0z" fill="#fcc828" /><path d="M5 29v-5q0-3 3-3h14q3 0 3 3v5z" fill="#0c78c8" /><path d="M9 25h12" stroke="#0a4c90" stroke-width="2" /></svg></button>
        <button class="run" aria-label="Edge"><svg width="30" height="30" viewBox="0 0 30 30"><circle cx="15" cy="15" r="14.500" fill="#1478d0" /><path d="M1 12Q4 1 15 1Q28 2 29 13Q29 19 22 20Q18 20 19 17Q20 9 11 9Q4 9 1 12Z" fill="#40cdb0" /><path d="M18 3Q28 4 29 13Q28 19 22 20Q18 19 19 17Q22 10 18 3Z" fill="#6cdc60" /><path d="M12 12Q7 18 11 24Q16 30 25 25Q14 26 12 12Z" fill="#0c4c94" /><path d="M14 12Q12 21 20 24Q24 24 28 21Q27 26 22 28Q12 27 11 19Q11 14 14 12Z" fill="#12344e" /></svg></button>
        <button aria-label="스토어"><svg width="30" height="30" viewBox="0 0 30 30"><path d="M8 7V2h14v5" fill="none" stroke="#1cb0f0" stroke-width="2.500" /><rect x="0" y="6" width="30" height="24" rx="3" fill="#f4f4f4" /><path d="M9 12h5v5H9z" fill="#f05022" /><path d="M16 12h5v5h-5z" fill="#7cba00" /><path d="M9 18h5v5H9z" fill="#00a2ee" /><path d="M16 18h5v5h-5z" fill="#ffb900" /></svg></button>
        <button aria-label="빠른 검색"><svg width="30" height="30" viewBox="0 0 30 30"><rect width="30" height="30" rx="10" fill="#2030c0" /><path d="M17 8a7 7 0 1 0 1 12l5 4M13 11h12M15 14h8M15 17h5" fill="none" stroke="#fff" stroke-width="2" /></svg></button>
        <button aria-label="전송"><svg width="30" height="30" viewBox="0 0 30 30"><rect width="30" height="30" rx="10" fill="#6050d0" /><path d="M5 12a10 10 0 0 1 20 0M5 18a10 10 0 0 0 20 0" fill="none" stroke="#b8b0f0" stroke-width="2" /><path d="M9 15h10M16 11l4 4-4 4" fill="none" stroke="#fff" stroke-width="2" /></svg></button>
        <button aria-label="브라우저"><svg width="30" height="30" viewBox="0 0 30 30"><defs><linearGradient id="b" x2="1" y2="1"><stop stop-color="#6c70f0" /><stop offset="1" stop-color="#20d0e0" /></linearGradient></defs><rect width="30" height="30" rx="11" fill="url(#b)" /><path d="M9 6q5 0 5 5v1q9-1 9 5t-8 7q-6 0-6-5z" fill="#fff" /><path d="M14 15q4-1 4 2t-4 3z" fill="#48a0e8" /></svg></button>
        <button class="cur" aria-label="영웅문"><span class="hero">雄美</span></button>
        <button class="run" aria-label="카카오톡"><svg width="30" height="30" viewBox="0 0 30 30"><rect width="30" height="30" fill="#fae100" /><ellipse cx="15" cy="13" rx="12" ry="9" fill="#371d1e" /><path d="M8 18L7 26L15 21Z" fill="#371d1e" /></svg><em>TALK</em></button>
      </div>
      <div class="tray">
        <svg class="chev" width="16" height="10" viewBox="0 0 16 10"><path d="M1 9l7-7 7 7" fill="none" stroke="#fff" stroke-width="2" /></svg>
        <svg width="22" height="14" viewBox="0 0 22 14"><path d="M5 14a5 5 0 0 1 0-9a7 7 0 0 1 12 0a5 5 0 0 1 1 9z" fill="#f4f4f4" /><path d="M7 3a7 7 0 0 1 10 2a5 5 0 0 1 4 5L7 3z" fill="#a8a8a8" /></svg>
        <svg class="mic" width="26" height="22" viewBox="0 0 26 22" fill="none" stroke="#78d0ec" stroke-width="2"><rect x="4" y="1" width="5" height="10" rx="2.500" /><path d="M1 7q0 7 5.500 7T12 7M6.500 14v3M24 8L14 15l5 1 2 5z" /></svg>
        <span class="ime">가</span><span class="ime">한</span>
        <svg class="wifi" width="20" height="16" viewBox="0 0 20 16" fill="none" stroke="#fff" stroke-width="2"><path d="M1 6q9-8 18 0M4 9q6-5 12 0M7 12q3-3 6 0" /><circle cx="10" cy="14" r="1" fill="#fff" /></svg>
        <svg width="18" height="16" viewBox="0 0 18 16" fill="none" stroke="#fff" stroke-width="1.500"><path d="M1 5h3l4-4v14l-4-4H1zM11 5q2 3 0 6M13 3q4 5 0 10" /></svg>
        <svg width="20" height="14" viewBox="0 0 20 14"><rect x="1" y="1" width="15" height="12" rx="3" fill="none" stroke="#fff" stroke-width="2" /><path d="M4 4h3v6H4zM17 5h2v4h-2z" fill="#fff" /></svg>
        <p class="clock">오전 10:30<br />2023-04-16</p>
      </div>
    </footer>
  </div>
</template>

<style>
body { margin: 0; background: #1c2024; }
</style>

<style scoped>
.desktop {
  --ui: "Noto Sans CJK KR", sans-serif;
  min-height: 100vh;
  display: flex;
  flex-direction: column;
  font: 16px/20px var(--ui);
  color: #333;
}
.desktop * { box-sizing: border-box; }
button, input, select { font: inherit; color: inherit; margin: 0; padding: 0; border: 0; background: none; border-radius: 0; white-space: nowrap; }
button { display: flex; align-items: center; justify-content: center; flex: none; }
svg { display: block; flex: none; }
p, h1 { margin: 0; font-size: inherit; font-weight: 400; }
.app { background: #3a5690; padding: 0 3px 4px 4px; flex: 1; display: flex; flex-direction: column; }
.caret { width: 0; height: 0; border: 5px solid transparent; border-top: 6px solid #666; border-bottom: 0; flex: none; display: block; }
.caret.light { border-top-color: #dfe6f2; }

.title { height: 32px; display: flex; align-items: center; color: #dde4f0; padding: 0 10px 0 1px; }
.logo { width: 20px; height: 24px; background: #f2f2f2; color: #e01818; font: 900 18px/24px var(--ui); text-align: center; overflow: hidden; }
.title h1 { margin-left: 6px; color: #fff; }
.phones { margin-left: auto; white-space: nowrap; margin-right: 12px; font-size: 15px; }
.tgroup { display: flex; align-items: center; height: 32px; border-left: 1px solid #54709f; }
.chat { margin-left: 12px; padding: 0 10px 0 8px; gap: 12px; font-size: 14px; }
.nums { width: 164px; padding: 0 8px 0 6px; justify-content: space-between; font: 14px/16px "DejaVu Sans", sans-serif; color: #fff; }
.nums button { width: 14px; }
.nums .on { font-weight: 700; border-bottom: 1px solid #dde4f0; }
.wins { padding-left: 11px; gap: 10px; }

.menu { position: relative; height: 52px; display: flex; flex-wrap: wrap; align-content: flex-start; column-gap: 16px; padding: 0 80px 0 12px; background: linear-gradient(#cfcfcf, #e4e4e4); border-bottom: 1px solid #b4b4b4; }
.menu a { color: #444; text-decoration: none; line-height: 26px; }
.menu a.hot { color: #e82010; }
.mdi { position: absolute; right: 6px; bottom: 1px; display: flex; gap: 1px; }
.mdi button { width: 18px; height: 18px; background: #e6e4dc; border: 1px solid #888; border-top-color: #fff; border-left-color: #fff; }

.main { display: flex; flex: 1; background: #eee; }
.work { flex: 1; min-width: 0; background: #eee; }
.row { display: flex; background: #cfcfcf; padding-left: 4px; margin-right: 2px; }
.tools1 { height: 36px; padding-top: 7px; gap: 1px; align-items: flex-start; color: #222; font-size: 15px; }
.tools2 { height: 29px; gap: 2px; align-items: flex-start; font-size: 15px; }
.box { height: 25px; border: 2px solid #9c9c9c; background: #eee; display: flex; flex: none; }
.box button { height: 21px; }
.sq { width: 24px; }
.pick { width: 40px; position: relative; background: #fcfdff; align-items: center; }
.pick select { appearance: none; width: 100%; height: 21px; padding-left: 2px; outline: 0; }
.pick .caret { position: absolute; right: 3px; pointer-events: none; }
.pick::after { content: ""; position: absolute; right: 16px; top: 0; bottom: 0; border-left: 1px solid #aaa; }
.pick.wide { width: 48px; }
.pick.wide select { padding-left: 6px; }
.code { width: 111px; background: #fcfdff; }
.code input { width: 64px; padding-left: 3px; flex: 1; min-width: 0; }
.arrow { width: 18px; background: #eee; border-left: 1px solid #aaa; }
.code .sq, .date .sq { background: #eee; border-left: 1px solid #aaa; }
.snd { width: 35px; }
.snd button { width: 20px; }
.snd .thin { width: 11px; border-left: 1px solid #aaa; }
.snd .thin .caret { border-width: 4px 3px 0; }
.stock { width: 102px; margin: 0 1px 0 2px; background: #f2f2f2; font-size: 16px; }
.stock b { width: 20px; background: #93a035; color: #fff; font-weight: 400; text-align: center; line-height: 20px; }
.stock span { color: #8c1c5c; padding-left: 2px; white-space: nowrap; }
.seg button { width: 24px; border-left: 1px solid #b0b0b0; }
.seg button:first-child { border-left: 0; width: 22px; }
.seg button:last-child { width: 22px; }
.seg .on { background: #4a80c4; color: #fff; }
.cnt { width: 38px; background: #fcfdff; text-align: right; padding-right: 2px; }
.total { width: 42px; line-height: 24px; color: #555; }
.chk { display: flex; align-items: center; gap: 2px; width: 31px; height: 24px; }
.chk input { appearance: none; width: 16px; height: 17px; flex: none; background: #fff; border: 1px solid #999; }
.date { width: 74px; background: #fcfdff; }
.date input { width: 48px; padding-left: 3px; }

.strip { display: flex; width: 937px; height: 25px; border: 2px solid #9c9c9c; background: #eee; line-height: 21px; color: #e82818; white-space: nowrap; }
.strip > div { display: flex; }
.strip > div + div { border-left: 1px solid #bbb; }
.b { color: #111; }
.r { text-align: right; flex: none; }
.tri { border: 6px solid transparent; border-bottom: 12px solid #e81c0c; border-top: 0; margin: 4px 0 0 4px; height: 0; }
.s1 { width: 213px; } .s2 { width: 214px; } .s3 { width: 103px; } .s4 { width: 174px; padding-left: 2px; justify-content: space-between; padding-right: 9px; }
.s5 { flex: 1; justify-content: space-between; padding: 0 12px 0 1px; }
.w73 { width: 73px; } .w62 { width: 62px; } .w60 { width: 60px; } .w86 { width: 85px; } .w74 { width: 75px; } .w50 { width: 51px; } .w98 { width: 98px; } .w53 { width: 53px; } .w63 { width: 63px; }
.buy, .sell { width: 50px; height: 25px; border: 2px solid #9c9c9c; background: #f5cdc8; color: #222; }
.sell { background: #c6dcf2; }

.chart { width: calc(100% - 9px); height: auto; margin-left: 4px; font: 15px var(--ui); }
.axis text { fill: #555; }

.scroll { display: flex; height: 27px; padding: 2px 5px 0 4px; align-items: flex-start; }
.sb { width: 22px; height: 20px; background: #f0f0f0; border: 1px solid #fff; border-right: 2px solid #888; border-bottom: 2px solid #888; }
.track { flex: 1; height: 20px; background: #f9f9f9; display: flex; justify-content: flex-end; }
.thumb { width: 57%; background: #efefef; border: 1px solid #fff; border-bottom: 2px solid #888; border-right: 1px solid #888; }
.slide { width: 102px; height: 20px; padding: 0 6px; }
.slide input { appearance: none; display: block; width: 86px; height: 20px; background: linear-gradient(#888, #888) 0 6px / 100% 2px no-repeat, repeating-linear-gradient(90deg, #222 0 2px, transparent 2px 8px) 2px 16px / 100% 4px no-repeat; }
.slide input::-webkit-slider-thumb { appearance: none; width: 5px; height: 14px; margin-top: -4px; background: #eee; border: 1px solid #888; }
.vt { width: 21px; height: 20px; }
.vt.on { background: #fff; border-left: 1px solid #aaa; }

.side { width: 39px; background: #efefef; display: flex; flex-direction: column; }
.grip { height: 3px; margin: 3px 3px 7px; background: repeating-linear-gradient(90deg, #b8b8b8 0 3px, transparent 3px 7px); }
.stack { flex: 1; display: flex; flex-direction: column; justify-content: space-between; align-items: flex-start; padding: 0 0 4px 3px; border-bottom: 2px solid #bbb; }
.stack button { position: relative; width: 31px; height: 30px; border: 2px solid #a0a0a0; background: #e4e3de; }
.stack span { position: absolute; left: 2px; bottom: 0; font: 700 10px/10px "Liberation Sans", sans-serif; color: #24408c; background: #fff; }
.blank { height: 40px; background: #fff; }

.dock { display: flex; height: 34px; background: linear-gradient(#d0d0d0, #e6e6e6); }
.hold { width: 15px; flex: none; display: flex; flex-direction: column; align-items: center; background: #e0e0e0; }
.hold i { font: 700 13px/11px "DejaVu Sans", sans-serif; color: #777; }
.hold u { width: 6px; height: 17px; margin-top: 3px; border: 2px solid #fff; border-width: 0 2px; background: #aaa; }
.hold.tall { background: #c4d2ee; padding-top: 3px; }
.hold.tall u { height: 38px; }
.tabs { flex: 1; display: flex; min-width: 0; }
.tabs button { flex: 0 1 136px; min-width: 0; justify-content: flex-start; padding-left: 4px; border-right: 2px solid #eee; overflow: hidden; color: #333; }
.tabs .on { background: linear-gradient(#b4b4b4, #c4c4c4); }
.tabs b { width: 17px; height: 19px; border-radius: 2px; background: #5a79b8; color: #fff; font: 700 13px/19px "DejaVu Sans", sans-serif; text-align: center; margin-right: 7px; flex: none; }
.tabs .web { background: #30a8c0; font-style: italic; }
.ico { width: 38px; }
.pic { width: 32px; border-left: 1px solid #eee; }

.ticker { display: flex; height: 58px; background: #dbe0ea; }
.group { width: 446px; margin-right: 2px; flex: none; display: grid; grid-template: 1fr 1fr / 1fr; gap: 2px; padding-top: 1px; font-size: 15px; }
.quote { display: flex; min-width: 0; align-items: center; background: #c3d2ee; color: #111; white-space: nowrap; }
.name { align-self: stretch; width: 94px; flex: none; margin-right: 15px; padding-left: 10px; background: #b0c4ee; color: #333; line-height: 27px; }
.cell { flex: none; }
.cell.up { color: #e03030; }
.cell.down { color: #1818c8; }
.drop { margin-left: auto; width: 34px; height: 20px; }
.news { flex: 1; min-width: 0; display: grid; grid-template: 1fr 1fr / 1fr; gap: 2px; padding-top: 1px; }
.item { display: flex; min-width: 0; align-items: center; background: #c3d2ee; padding-left: 10px; white-space: nowrap; }
.item p { flex: 1; min-width: 0; overflow: hidden; }
.src { margin-left: 16px; }
.item .drop { margin: 0 0 0 2px; }
.sig { width: 119px; justify-content: flex-start; gap: 5px; padding-left: 6px; }
.end { width: 119px; display: flex; align-self: stretch; }
.end button { width: 48px; border-left: 1px solid #dbe0ea; }
.end button:first-child { width: 30px; border: 0; }
.end button:last-child { width: 41px; }

.taskbar { height: 60px; flex: none; display: grid; grid-template-columns: 1fr auto 1fr; align-items: center; background: linear-gradient(90deg, #1c2024 27%, #122635 40%, #142530 55%, #1c2024 70%); border-top: 1px solid #3c4248; color: #fff; }
.widget { padding-left: 13px; }
.pins { display: flex; align-items: center; gap: 1px; padding-bottom: 1px; }
.pins > button { width: 54px; height: 52px; position: relative; border-radius: 5px; }
.search { display: flex; align-items: center; width: 274px; height: 40px; margin: 0 4px 0 5px; padding: 0 6px 0 15px; border-radius: 20px; background: #2c3b46; }
.search input { flex: 1; min-width: 0; padding-left: 12px; color: #fff; outline: 0; }
.search input::placeholder { color: #eee; opacity: 1; }
.pins .cur { width: 50px; margin: 0 2px; background: #2a3036; }
.run::after, .cur::after { content: ""; position: absolute; bottom: 1px; left: 23px; width: 8px; height: 4px; border-radius: 2px; background: #999; }
.cur::after { left: 15px; width: 20px; background: #4cc2ff; }
.hero { width: 30px; height: 30px; background: #eee; color: #d01818; font: 900 15px/30px var(--ui); }
.run em { position: absolute; left: 0; right: 0; top: 17px; text-align: center; font: 700 8px/12px "Liberation Sans", sans-serif; color: #fae100; }
.tray { display: flex; justify-content: flex-end; align-items: center; gap: 10px; padding-right: 19px; }
.chev { margin-right: 10px; }
.mic { margin-left: 5px; }
.wifi { margin-left: 9px; }
.ime { font-size: 20px; line-height: 24px; width: 38px; text-align: center; }
.clock { font: 15px/21px "Open Sans", var(--ui); text-align: right; white-space: nowrap; margin-left: 11px; }
</style>
